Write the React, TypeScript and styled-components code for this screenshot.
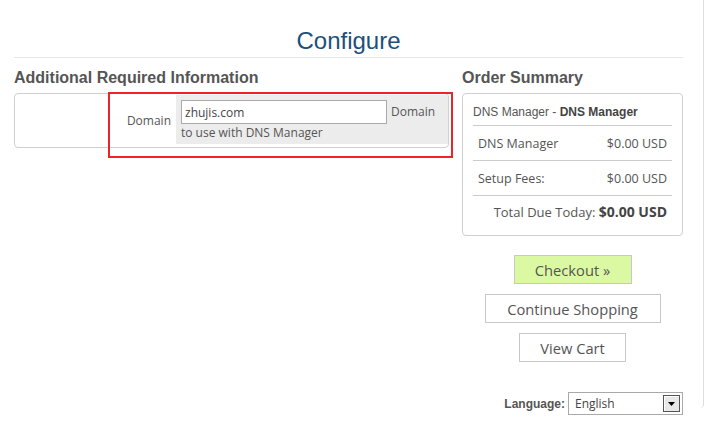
import React from "react";
import styled, { createGlobalStyle } from "styled-components";

const Global = createGlobalStyle`
  html, body { margin: 0; padding: 0; background: #fff; }
  body { font-family: "Open Sans", "DejaVu Sans", sans-serif; color: #555; }
  * { box-sizing: border-box; }
`;

const Page = styled.div`
  min-height: 442px;
  width: 705px;
`;

const Frame = styled.div`
  width: 704px;
  height: 408px;
  border-right: 1px solid #dcdcdc;
  border-bottom-right-radius: 4px;
  padding: 27px 20px 0 14px;
`;

const Title = styled.h1`
  margin: 0;
  font-family: "Liberation Sans", Arial, sans-serif;
  font-weight: normal;
  font-size: 24px;
  line-height: 28px;
  color: #1d4f7c;
  text-align: center;
  padding-bottom: 2px;
  border-bottom: 1px solid #e6e6e6;
`;

const Columns = styled.div`
  display: flex;
  gap: 13px;
  margin-top: 10px;
`;

const Column = styled.div<{ $w: number }>`
  width: ${(p) => p.$w}px;
  display: flex;
  flex-direction: column;
`;

const Heading = styled.h2`
  margin: 0 0 5px;
  font-family: "Liberation Sans", Arial, sans-serif;
  font-weight: bold;
  font-size: 16px;
  line-height: 20px;
  color: #555;
`;

const Panel = styled.div`
  border: 1px solid #cfcfcf;
  border-radius: 4px;
  background: #fff;
`;

const FieldPanel = styled(Panel)`
  height: 55px;
  position: relative;
`;

const Highlight = styled.div`
  position: absolute;
  left: 93px;
  top: -2px;
  width: 345px;
  height: 66px;
  border: 2px solid #e8262a;
`;

const FieldRow = styled.div`
  display: flex;
  padding: 1px 0 0 95px;
  font-size: 12px;
`;

const FieldLabel = styled.div`
  width: 66px;
  text-align: right;
  padding-top: 17px;
  padding-right: 5px;
  color: #555;
`;

const FieldBody = styled.div`
  width: 272px;
  height: 49px;
  background: #ececec;
  padding: 5px 0 0 5px;
  line-height: 18px;
  color: #555;
`;

const Input = styled.input`
  width: 206px;
  height: 24px;
  border: 1px solid #aaa;
  font-family: "Open Sans", "DejaVu Sans", sans-serif;
  font-size: 12px;
  color: #444;
  padding: 0 3px;
  margin-right: 4px;
  vertical-align: top;
  background: #fff;
`;

const HelpInline = styled.span`
  display: inline-block;
  padding-top: 3px;
`;

const SummaryPanel = styled(Panel)`
  padding: 8px 10px 9px 10px;
  font-size: 12.5px;
  color: #555;
`;

const SummaryTitle = styled.div`
  font-family: "Liberation Sans", Arial, sans-serif;
  font-size: 12px;
  line-height: 18px;
  padding: 1px 0 4px 0;
  border-bottom: 1px solid #ccc;
  b { color: #444; }
`;

const SummaryRow = styled.div`
  display: flex;
  justify-content: space-between;
  align-items: center;
  height: 35px;
  padding: 0 5px 0 5px;
  border-bottom: 1px solid #ccc;
`;

const TotalRow = styled.div`
  text-align: right;
  line-height: 18px;
  padding: 7px 5px 5px 0;
  font-size: 13px;
  b { font-size: 14px; color: #444; }
`;

const Actions = styled.div`
  display: flex;
  flex-direction: column;
  align-items: center;
  gap: 10px;
  margin-top: 19px;
`;

const Button = styled.button<{ $primary?: boolean; $w: number }>`
  width: ${(p) => p.$w}px;
  height: 29px;
  border: 1px solid #c8c8c8;
  background: ${(p) => (p.$primary ? "#dbf9a3" : "#fff")};
  font-family: "Open Sans", "DejaVu Sans", sans-serif;
  font-size: 14.7px;
  color: #555;
  padding: 0;
  cursor: pointer;
`;

const LangRow = styled.div`
  display: flex;
  justify-content: flex-end;
  align-items: center;
  gap: 3px;
  margin-top: 30px;
  font-size: 12px;
`;

const LangLabel = styled.span`
  font-family: "Liberation Sans", Arial, sans-serif;
  font-weight: bold;
  color: #555;
`;

const Select = styled.div`
  width: 115px;
  height: 23px;
  border: 1px solid #a9a9a9;
  display: flex;
  align-items: center;
  justify-content: space-between;
  padding: 0 2px 0 6px;
  font-size: 12px;
  color: #444;
  background: #fff;
`;

const Arrow = styled.div`
  width: 17px;
  height: 17px;
  border: 1px solid #555;
  background: #e8e8e8;
  box-shadow: inset 1px 1px 0 #fff;
  display: flex;
  align-items: center;
  justify-content: center;
`;

export default function App() {
  return (
    <Page>
      <Global />
      <Frame>
        <Title>Configure</Title>
        <Columns>
          <Column $w={435}>
            <Heading>Additional Required Information</Heading>
            <FieldPanel>
              <Highlight />
              <FieldRow>
                <FieldLabel>Domain</FieldLabel>
                <FieldBody>
                  <Input defaultValue="zhujis.com" />
                  <HelpInline>Domain</HelpInline>
                  <div>to use with DNS Manager</div>
                </FieldBody>
              </FieldRow>
            </FieldPanel>
          </Column>
          <Column $w={222}>
            <Heading>Order Summary</Heading>
            <SummaryPanel>
              <SummaryTitle>
                DNS Manager - <b>DNS Manager</b>
              </SummaryTitle>
              <SummaryRow>
                <span>DNS Manager</span>
                <span>$0.00 USD</span>
              </SummaryRow>
              <SummaryRow>
                <span>Setup Fees:</span>
                <span>$0.00 USD</span>
              </SummaryRow>
              <TotalRow>
                Total Due Today: <b>$0.00 USD</b>
              </TotalRow>
            </SummaryPanel>
            <Actions>
              <Button $primary $w={118}>Checkout »</Button>
              <Button $w={176}>Continue Shopping</Button>
              <Button $w={107}>View Cart</Button>
            </Actions>
            <LangRow>
              <LangLabel>Language:</LangLabel>
              <Select>
                <span>English</span>
                <Arrow>
                  <svg width="7" height="4" viewBox="0 0 7 4">
                    <path d="M0 0h7L3.5 4z" fill="#000" />
                  </svg>
                </Arrow>
              </Select>
            </LangRow>
          </Column>
        </Columns>
      </Frame>
    </Page>
  );
}
